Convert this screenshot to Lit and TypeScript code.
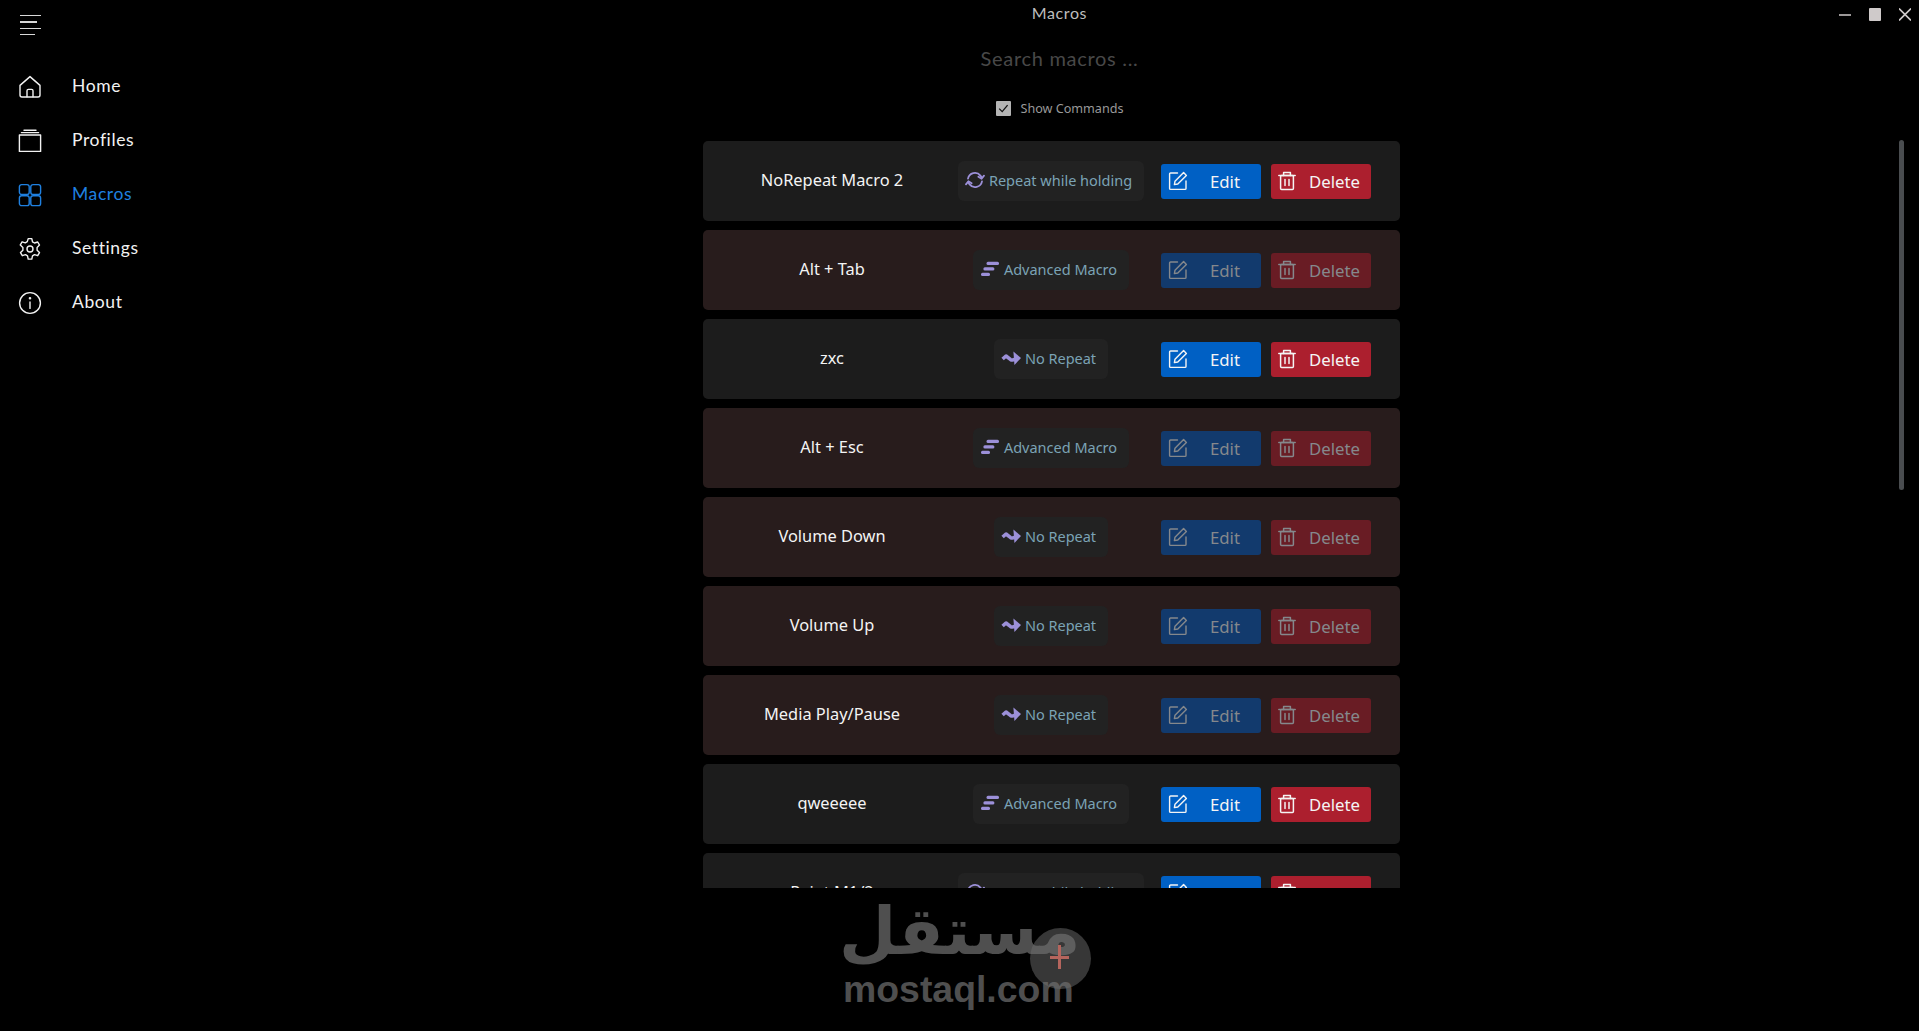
import { LitElement, html, css, svg } from "lit";
import { customElement } from "lit/decorators.js";

type Mode = "hold" | "adv" | "none";
const rows: { name: string; mode: Mode; on: boolean }[] = [
  { name: "NoRepeat Macro 2", mode: "hold", on: true },
  { name: "Alt + Tab", mode: "adv", on: false },
  { name: "zxc", mode: "none", on: true },
  { name: "Alt + Esc", mode: "adv", on: false },
  { name: "Volume Down", mode: "none", on: false },
  { name: "Volume Up", mode: "none", on: false },
  { name: "Media Play/Pause", mode: "none", on: false },
  { name: "qweeeee", mode: "adv", on: true },
  { name: "Paint M1/2", mode: "hold", on: true },
];

const modeLabel: Record<Mode, string> = { hold: "Repeat while holding", adv: "Advanced Macro", none: "No Repeat" };

const modeIcon = (m: Mode) => {
  if (m === "hold")
    return svg`<svg class="mi" viewBox="0 0 20 20" fill="none" stroke="currentColor" stroke-width="1.8" stroke-linecap="round" stroke-linejoin="round"><path d="M3 8.6a7 7 0 0 1 12.4-3l1.2 1.6"/><path d="M19 5.6l-2.4 3.2-3.2-2"/><path d="M17 11.4a7 7 0 0 1-12.4 3l-1.2-1.6"/><path d="M1 14.4l2.4-3.2 3.2 2"/></svg>`;
  if (m === "adv")
    return svg`<svg class="mi" viewBox="0 0 20 20" fill="currentColor"><rect x="6.5" y="2.8" width="12.5" height="3.2" rx="1.5"/><rect x="3.4" y="8.3" width="11" height="3.2" rx="1.5"/><rect x="1" y="13.8" width="9" height="3.2" rx="1.5"/></svg>`;
  return svg`<svg class="mi" viewBox="0 0 20 20"><path d="M1.6 11 5 8l4.4 3.4c1.2.8 2.6.8 4.4 0" fill="none" stroke="currentColor" stroke-width="3.6" stroke-linejoin="round"/><path d="M12.4 3.4 20 10l-6.6 7z" fill="currentColor"/></svg>`;
};

const editIcon = svg`<svg class="bi" viewBox="0 0 20 20" fill="none" stroke="currentColor" stroke-width="1.4" stroke-linejoin="round" stroke-linecap="round"><path d="M9.5 2H2.6a1 1 0 0 0-1 1v14.4a1 1 0 0 0 1 1H17a1 1 0 0 0 1-1V10"/><path d="M15.6 1.6l2.8 2.8-8.6 8.6-3.4.6.6-3.4z"/></svg>`;
const trashIcon = svg`<svg class="bi" viewBox="0 0 20 20" fill="none" stroke="currentColor" stroke-width="1.5" stroke-linejoin="round" stroke-linecap="round"><path d="M1.8 4.6h16.4"/><path d="M6.6 4.4V1.6h6.8v2.8"/><rect x="3.6" y="4.6" width="12.8" height="14" rx="1"/><path d="M8 8.6v5.8M12 8.6v5.8"/></svg>`;

const navIcons = {
  home: svg`<path d="M2 10.4 12 1.6l10 8.8v9.6a2 2 0 0 1-2 2H4a2 2 0 0 1-2-2V10.4z"/><path d="M9 21.8v-6a1.4 1.4 0 0 1 1.4-1.4h3.2a1.4 1.4 0 0 1 1.4 1.4v6"/>`,
  profiles: svg`<rect x="1.4" y="6" width="21.2" height="16.4"/><path d="M3.4 3.6h17.2M6 1.2h12"/>`,
  macros: svg`<rect x="1.4" y="1.6" width="9.8" height="9.8" rx="2.2"/><rect x="12.8" y="1.6" width="9.8" height="9.8" rx="2.2"/><rect x="1.4" y="12.8" width="9.8" height="9.8" rx="2.2"/><rect x="12.8" y="12.8" width="9.8" height="9.8" rx="2.2"/>`,
  settings: svg`<circle cx="12" cy="12" r="3"/><path d="M10.2 1.6h3.6l.7 3.2 2 1.2 3.2-1 1.8 3.1-2.4 2.3v2.9l2.4 2.3-1.8 3.1-3.2-1-2 1.2-.7 3.2h-3.6l-.7-3.2-2-1.2-3.2 1-1.8-3.1 2.4-2.3v-2.9L2.3 7.9l1.8-3.1 3.2 1 2-1.2z"/>`,
  about: svg`<circle cx="12" cy="12" r="10.4"/><path d="M12 11v6.4"/><circle cx="12" cy="7.2" r=".6"/>`,
};

const nav: { key: keyof typeof navIcons; label: string; active?: boolean }[] = [
  { key: "home", label: "Home" },
  { key: "profiles", label: "Profiles" },
  { key: "macros", label: "Macros", active: true },
  { key: "settings", label: "Settings" },
  { key: "about", label: "About" },
];

@customElement("app-root")
export class AppRoot extends LitElement {
  static styles = css`
    :host {
      display: flex;
      width: 100%;
      height: 100vh;
      background: #000;
      color: #fff;
      overflow: hidden;
      position: relative;
      font-family: "Noto Sans", sans-serif;
    }
    .side {
      width: 200px;
      flex: none;
      padding: 15px 0 0 18px;
      box-sizing: border-box;
      font-family: "Lato", sans-serif;
    }
    .burger {
      display: flex;
      flex-direction: column;
      gap: 5px;
      width: 21px;
      margin: 0 0 25px 2px;
      height: 20px;
    }
    .burger i {
      display: block;
      height: 1.5px;
      background: #d8d8d8;
    }
    .nav {
      display: flex;
      align-items: center;
      height: 54px;
      gap: 30px;
      font-size: 17.5px;
      letter-spacing: 0.6px;
      color: #f2f2f2;
    }
    .nav span {
      margin-top: -3px;
    }
    .nav.active {
      color: #1f80e0;
    }
    .nav svg {
      width: 24px;
      height: 24px;
      flex: none;
      fill: none;
      stroke: currentColor;
      stroke-width: 1.4;
      stroke-linejoin: round;
      stroke-linecap: round;
    }
    .main {
      flex: 1;
      min-width: 0;
      display: flex;
      flex-direction: column;
      align-items: stretch;
    }
    .title {
      text-align: center;
      font-family: "Lato", sans-serif;
      font-size: 16px;
      letter-spacing: 0.6px;
      color: #bdbdbd;
      height: 26px;
      line-height: 26px;
    }
    .search {
      text-align: center;
      font-family: "Lato", sans-serif;
      font-size: 20px;
      letter-spacing: 0.7px;
      color: #484848;
      height: 32px;
      line-height: 32px;
      margin-top: 16px;
    }
    .check {
      display: flex;
      justify-content: center;
      align-items: center;
      gap: 10px;
      height: 24px;
      margin-top: 22px;
      font-size: 12.6px;
      color: #999;
    }
    .box {
      width: 15px;
      height: 15px;
      background: #b4b4b4;
      border-radius: 1px;
      display: flex;
    }
    .box svg {
      width: 15px;
      height: 15px;
    }
    .listwrap {
      height: 747px;
      margin-top: 21px;
      overflow: hidden;
      padding-left: 502.5px;
      box-sizing: border-box;
    }
    .list {
      width: 697.5px;
      display: flex;
      flex-direction: column;
      gap: 9px;
    }
    .row {
      height: 80px;
      flex: none;
      display: grid;
      grid-template-columns: 219px 219px 100px 100px;
      column-gap: 0;
      align-items: center;
      padding-left: 20px;
      box-sizing: border-box;
      background: #1c1c1c;
      border-radius: 5px;
    }
    .row.off {
      background: #281c1c;
    }
    .name {
      text-align: center;
      font-size: 16.4px;
      color: #f4f4f4;
      margin-top: -3px;
    }
    .chipcell {
      display: flex;
      justify-content: center;
      margin-top: -1px;
    }
    .chip {
      height: 40px;
      display: flex;
      align-items: center;
      gap: 4px;
      padding: 0 12px 2px 7px;
      box-sizing: border-box;
      background: #222;
      border-radius: 6px;
      font-size: 14.5px;
      color: #7ba3b5;
      white-space: nowrap;
    }
    .mi {
      width: 20px;
      height: 20px;
      color: #9c90d9;
      flex: none;
    }
    .btn {
      height: 35px;
      width: 100px;
      border-radius: 3px;
      display: flex;
      align-items: center;
      box-sizing: border-box;
      padding-left: 7px;
      font-size: 16.8px;
      color: #f4f4f4;
    }
    .btn span {
      flex: 1;
      text-align: center;
      padding-left: 2px;
    }
    .bi {
      width: 20px;
      height: 20px;
      flex: none;
      margin-top: -1px;
    }
    .btn.edit {
      background: #0060c4;
    }
    .btn.del {
      background: #ac1f2e;
      margin-left: 10px;
      padding-left: 6px;
    }
    .off .btn {
      color: #85888c;
    }
    .off .btn.edit {
      background: #123a6d;
    }
    .off .btn.del {
      background: #691c24;
    }
    .winctl {
      position: absolute;
      top: 8px;
      right: 8px;
      display: flex;
      gap: 18px;
      color: #cfcaca;
    }
    .winctl svg {
      width: 12px;
      height: 13px;
      display: block;
    }
    .scroll {
      position: absolute;
      left: 1899px;
      top: 140px;
      width: 5px;
      height: 350px;
      border-radius: 3px;
      background: #4a4d50;
    }
    .mark {
      position: absolute;
      left: 838px;
      top: 895px;
      width: 260px;
      height: 120px;
      pointer-events: none;
    }
    .mark .ar {
      position: absolute;
      left: 1px;
      top: -8px;
      font-family: "DejaVu Sans", sans-serif;
      font-weight: 700;
      font-size: 66px;
      line-height: 90px;
      color: #4f4f4f;
      white-space: nowrap;
    }
    .mark .en {
      position: absolute;
      left: 5px;
      top: 74px;
      font-family: "Liberation Sans", sans-serif;
      font-weight: 700;
      font-size: 37.4px;
      line-height: 40px;
      color: #4f4f4f;
      white-space: nowrap;
    }
    .mark .disc {
      position: absolute;
      left: 192px;
      top: 33px;
      width: 61px;
      height: 61px;
      border-radius: 50%;
      background: rgba(110, 110, 110, 0.5);
    }
    .mark .p1,
    .mark .p2 {
      position: absolute;
      background: #b5655d;
    }
    .mark .p1 {
      left: 212px;
      top: 61px;
      width: 19px;
      height: 3px;
    }
    .mark .p2 {
      left: 220px;
      top: 50px;
      width: 3px;
      height: 24px;
    }
  `;

  render() {
    return html`
      <aside class="side">
        <div class="burger"><i></i><i style="width:17px"></i><i></i><i style="width:15px"></i></div>
        ${nav.map(
          (n) => html`<div class="nav ${n.active ? "active" : ""}">
            <svg viewBox="0 0 24 24">${navIcons[n.key]}</svg><span>${n.label}</span>
          </div>`
        )}
      </aside>
      <main class="main">
        <div class="title">Macros</div>
        <div class="search">Search macros ...</div>
        <div class="check">
          <span class="box"><svg viewBox="0 0 15 15" fill="none" stroke="#111" stroke-width="1.3"><path d="M3.2 7.6l3 3 5.4-6.4" /></svg></span>
          <span>Show Commands</span>
        </div>
        <div class="listwrap">
          <div class="list">
            ${rows.map(
              (r) => html`<div class="row ${r.on ? "" : "off"}">
                <div class="name">${r.name}</div>
                <div class="chipcell"><div class="chip">${modeIcon(r.mode)}<span>${modeLabel[r.mode]}</span></div></div>
                <div class="btn edit">${editIcon}<span>Edit</span></div>
                <div class="btn del">${trashIcon}<span>Delete</span></div>
              </div>`
            )}
          </div>
        </div>
      </main>
      <div class="winctl">
        <svg viewBox="0 0 12 13" fill="none" stroke="currentColor" stroke-width="1.5"><path d="M0 7h12" /></svg>
        <svg viewBox="0 0 12 13" fill="currentColor"><rect width="12" height="13" rx="1" /></svg>
        <svg viewBox="0 0 12 13" fill="none" stroke="currentColor" stroke-width="1.6"><path d="M0 .5l12 12M12 .5l-12 12" /></svg>
      </div>
      <div class="scroll"></div>
      <div class="mark">
        <div class="ar" dir="rtl">مستقل</div>
        <div class="en">mostaql.com</div>
        <div class="disc"></div>
        <div class="p1"></div>
        <div class="p2"></div>
      </div>
    `;
  }
}
